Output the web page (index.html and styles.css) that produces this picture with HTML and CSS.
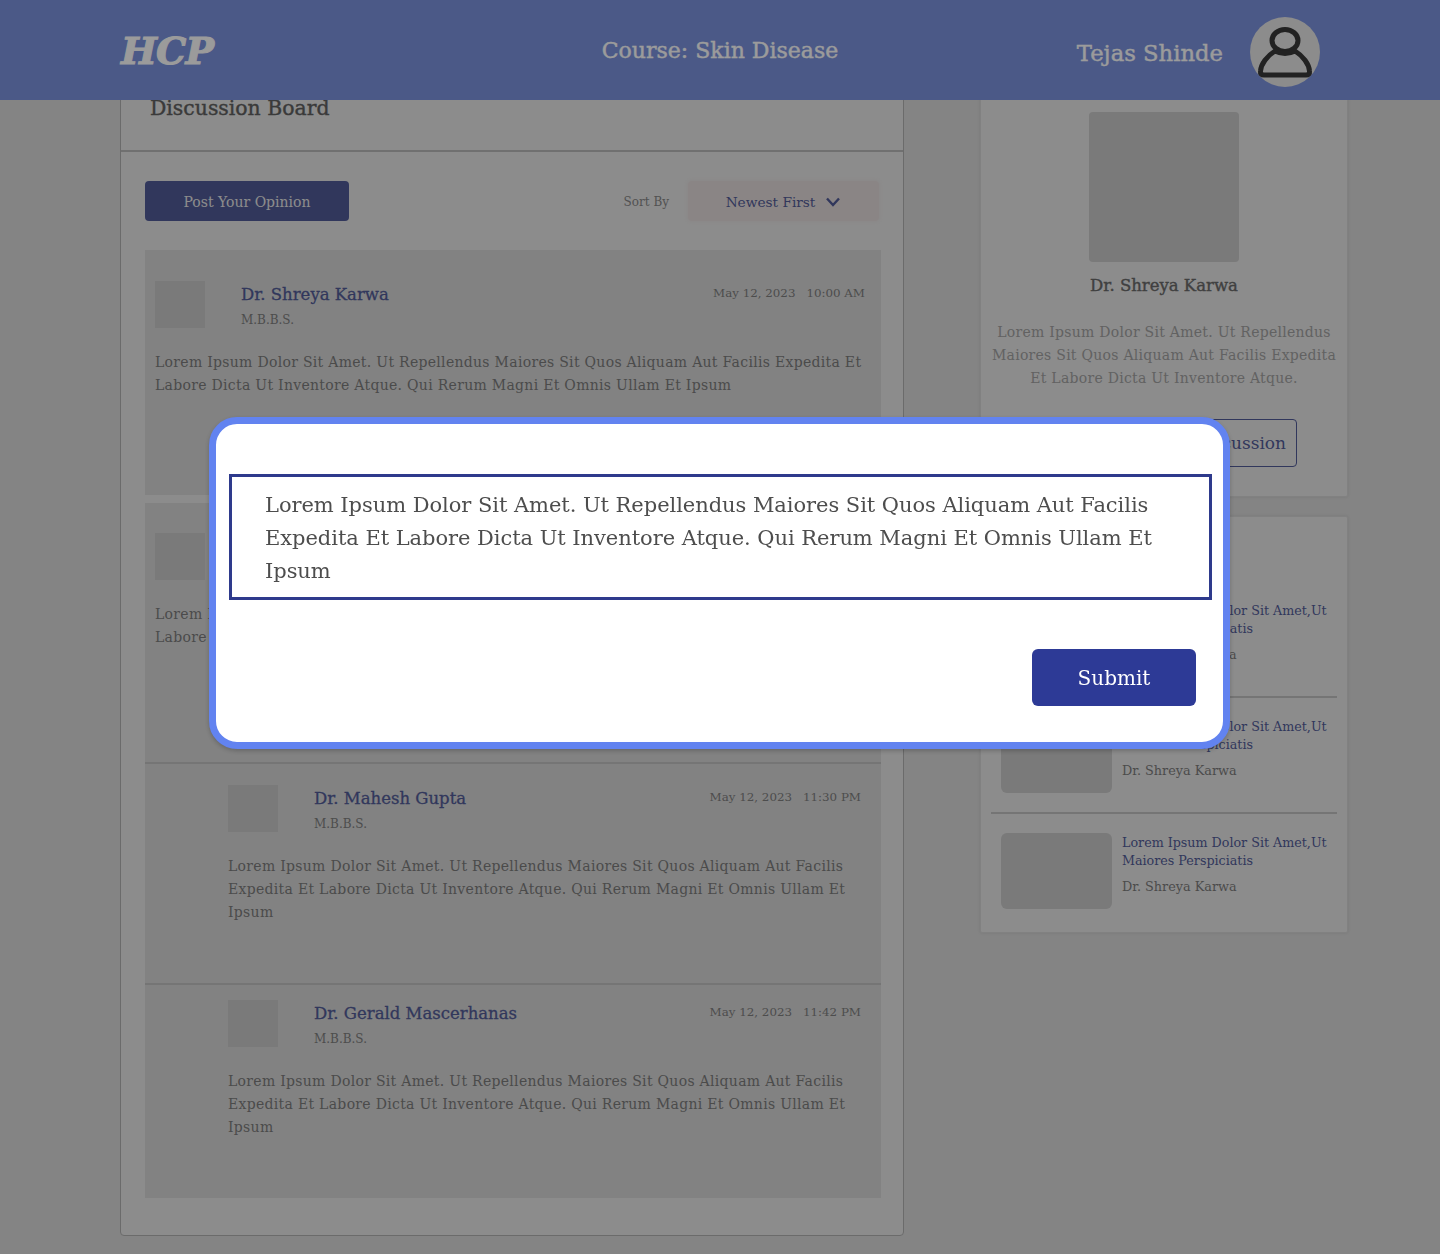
FILE: index.html
```html
<html lang="en">
<head>
    <meta charset="UTF-8">
    <meta name="viewport" content="width=device-width, initial-scale=1.0">
    <title>Discussion Board</title>
    <link rel="stylesheet" href="styles.css">
</head>
<body>
    <header class="topbar">
        <div class="logo">HCP</div>
        <div class="course">Course: Skin Disease</div>
        <div class="user">
            <span class="user_name">Tejas Shinde</span>
            <span class="user_avatar">
                <svg width="70" height="70" viewBox="0 0 70 70" fill="none" stroke="#0c0c0c" stroke-width="5">
                    <ellipse cx="35" cy="23.5" rx="13" ry="11"/>
                    <path d="M25 34 C17 39 11 47 10.5 54 Q10 58 14 58 H56 Q60 58 59.5 54 C59 47 53 39 45 34 Q35 39 25 34 Z" stroke-linejoin="round"/>
                </svg>
            </span>
        </div>
    </header>

    <main class="layout">
        <section class="board">
            <h1 class="board_title">Discussion Board</h1>
            <div class="board_body">
                <div class="board_tools">
                    <button class="post_btn">Post Your Opinion</button>
                    <div class="sort">
                        <span class="sort_label">Sort By</span>
                        <div class="sort_box">
                            Newest First
                            <svg width="16" height="10" viewBox="0 0 16 10" fill="none" stroke="#2a3680" stroke-width="2.4">
                                <path d="M2 1.5 L8 8 L14 1.5"/>
                            </svg>
                        </div>
                    </div>
                </div>

                <div class="thread">
                    <article class="post post_first">
                        <div class="post_head">
                            <div class="post_avatar"></div>
                            <div class="post_who">
                                <div class="post_name">Dr. Shreya Karwa</div>
                                <div class="post_degree">M.B.B.S.</div>
                            </div>
                            <div class="post_date"><span>May 12, 2023</span><span>10:00 AM</span></div>
                        </div>
                        <p class="post_text">Lorem Ipsum Dolor Sit Amet. Ut Repellendus Maiores Sit Quos Aliquam Aut Facilis Expedita Et Labore Dicta Ut Inventore Atque. Qui Rerum Magni Et Omnis Ullam Et Ipsum</p>
                    </article>
                </div>

                <div class="thread thread_second">
                    <article class="post post_second">
                        <div class="post_head">
                            <div class="post_avatar"></div>
                            <div class="post_who">
                                <div class="post_name">Dr. Shreya Karwa</div>
                                <div class="post_degree">M.B.B.S.</div>
                            </div>
                            <div class="post_date"><span>May 12, 2023</span><span>11:00 AM</span></div>
                        </div>
                        <p class="post_text">Lorem Ipsum Dolor Sit Amet. Ut Repellendus Maiores Sit Quos Aliquam Aut Facilis Expedita Et Labore Dicta Ut Inventore Atque. Qui Rerum Magni Et Omnis Ullam Et Ipsum</p>
                    </article>
                    <article class="post post_reply reply_one">
                        <div class="post_head">
                            <div class="post_avatar"></div>
                            <div class="post_who">
                                <div class="post_name">Dr. Mahesh Gupta</div>
                                <div class="post_degree">M.B.B.S.</div>
                            </div>
                            <div class="post_date"><span>May 12, 2023</span><span>11:30 PM</span></div>
                        </div>
                        <p class="post_text">Lorem Ipsum Dolor Sit Amet. Ut Repellendus Maiores Sit Quos Aliquam Aut Facilis Expedita Et Labore Dicta Ut Inventore Atque. Qui Rerum Magni Et Omnis Ullam Et Ipsum</p>
                    </article>
                    <article class="post post_reply reply_two">
                        <div class="post_head">
                            <div class="post_avatar"></div>
                            <div class="post_who">
                                <div class="post_name">Dr. Gerald Mascerhanas</div>
                                <div class="post_degree">M.B.B.S.</div>
                            </div>
                            <div class="post_date"><span>May 12, 2023</span><span>11:42 PM</span></div>
                        </div>
                        <p class="post_text">Lorem Ipsum Dolor Sit Amet. Ut Repellendus Maiores Sit Quos Aliquam Aut Facilis Expedita Et Labore Dicta Ut Inventore Atque. Qui Rerum Magni Et Omnis Ullam Et Ipsum</p>
                    </article>
                </div>
            </div>
        </section>

        <aside class="side">
            <section class="side_card doctor">
                <div class="doctor_photo"></div>
                <h2 class="doctor_name">Dr. Shreya Karwa</h2>
                <p class="doctor_text">Lorem Ipsum Dolor Sit Amet. Ut Repellendus Maiores Sit Quos Aliquam Aut Facilis Expedita Et Labore Dicta Ut Inventore Atque.</p>
                <button class="doctor_btn">Join Discussion</button>
            </section>
            <section class="side_card related">
                <div class="related_item">
                    <div class="related_thumb"></div>
                    <div class="related_info">
                        <div class="related_title">Lorem Ipsum Dolor Sit Amet,Ut Maiores Perspiciatis</div>
                        <div class="related_author">Dr. Shreya Karwa</div>
                    </div>
                </div>
                <div class="related_item">
                    <div class="related_thumb"></div>
                    <div class="related_info">
                        <div class="related_title">Lorem Ipsum Dolor Sit Amet,Ut Maiores Perspiciatis</div>
                        <div class="related_author">Dr. Shreya Karwa</div>
                    </div>
                </div>
                <div class="related_item">
                    <div class="related_thumb"></div>
                    <div class="related_info">
                        <div class="related_title">Lorem Ipsum Dolor Sit Amet,Ut Maiores Perspiciatis</div>
                        <div class="related_author">Dr. Shreya Karwa</div>
                    </div>
                </div>
            </section>
        </aside>
    </main>

    <div class="overlay">
        <form class="modal">
            <div class="modal_text">Lorem Ipsum Dolor Sit Amet. Ut Repellendus Maiores Sit Quos Aliquam Aut Facilis Expedita Et Labore Dicta Ut Inventore Atque. Qui Rerum Magni Et Omnis Ullam Et Ipsum</div>
            <div class="modal_actions">
                <button type="button" class="submit_btn">Submit</button>
            </div>
        </form>
    </div>
</body>
</html>
```

FILE: styles.css
```css
/* Reset some default styles */
body, h1, h2, p {
    margin: 0;
    padding: 0;
}
* {
    box-sizing: border-box;
}
body {
    font-family: "DejaVu Serif", serif;
    background-color: #d0d0d0;
    height: 1254px;
    overflow: hidden;
}
button {
    font-family: inherit;
    cursor: pointer;
}

/* Top bar */
.topbar {
    position: fixed;
    top: 0;
    left: 0;
    right: 0;
    height: 100px;
    padding: 0 120px;
    background-color: #5e7ad6;
    display: grid;
    grid-template-columns: 1fr auto 1fr;
    align-items: center;
    color: #fff;
    z-index: 2;
}
.logo {
    font-size: 38px;
    font-weight: 700;
    font-style: italic;
    letter-spacing: -0.8px;
    -webkit-text-stroke: 1px #fff;
    margin-left: 1px;
}
.course {
    font-size: 22px;
    -webkit-text-stroke: 0.4px #fff;
}
.user {
    justify-self: end;
    display: flex;
    align-items: center;
    gap: 27px;
    margin-top: 4px;
}
.user_name {
    font-size: 22.7px;
    -webkit-text-stroke: 0.4px #fff;
    margin-top: 1px;
}
.user_avatar {
    width: 70px;
    height: 70px;
    border-radius: 50%;
    background-color: #e0e0e0;
    display: block;
}

/* Page columns */
.layout {
    padding: 70px 92px 0 120px;
    display: flex;
    justify-content: space-between;
    align-items: flex-start;
}
.board {
    width: 784px;
    height: 1166px;
    background-color: #e0e0e0;
    border: 1px solid #9e9e9e;
    border-radius: 4px;
}
.board_title {
    height: 81px;
    padding: 25px 29px 0;
    font-size: 20.4px;
    font-weight: 400;
    -webkit-text-stroke: 0.4px #3c3c3c;
    color: #3c3c3c;
    border-bottom: 2px solid #a8a8a8;
}
.board_body {
    padding: 29px 22px 0 24px;
}
.board_tools {
    display: flex;
    justify-content: space-between;
    align-items: center;
    height: 40px;
}
.post_btn {
    width: 204px;
    height: 40px;
    padding-top: 2px;
    border: none;
    border-radius: 4px;
    background-color: #2a3680;
    color: #e0e0e0;
    font-size: 14px;
}
.sort {
    display: flex;
    align-items: center;
    gap: 19px;
    margin-right: 2px;
}
.sort_label {
    font-size: 12px;
    color: #6c6c6c;
    padding-top: 1px;
}
.sort_box {
    width: 191px;
    height: 40px;
    padding-top: 1px;
    border-radius: 4px;
    background-color: #dcd2d2;
    box-shadow: 0 0 4px #dcd2d2;
    color: #2a3680;
    font-size: 13.7px;
    display: flex;
    align-items: center;
    justify-content: center;
    gap: 10px;
}

/* Discussion threads */
.thread {
    margin-top: 29px;
    background-color: #cccccc;
}
.thread_second {
    margin-top: 8px;
}
.post {
    padding: 31px 16px 0 10px;
}
.post_first {
    height: 245px;
}
.post_second {
    height: 261px;
    padding-top: 30px;
    border-bottom: 2px solid #b2b2b2;
}
.post_reply {
    padding-left: 83px;
    padding-right: 20px;
}
.reply_one {
    height: 221px;
    padding-top: 21px;
    border-bottom: 2px solid #b2b2b2;
}
.reply_two {
    height: 213px;
    padding-top: 15px;
}
.post_head {
    display: flex;
    align-items: flex-start;
}
.post_avatar {
    width: 50px;
    height: 47px;
    background-color: #bcbcbc;
    flex-shrink: 0;
}
.post_who {
    margin-left: 36px;
    margin-top: 2px;
    flex-grow: 1;
}
.post_name {
    font-size: 16.5px;
    -webkit-text-stroke: 0.3px #2a3680;
    color: #2a3680;
    line-height: 24px;
}
.post_degree {
    font-size: 12px;
    color: #626262;
    line-height: 18px;
    margin-top: 4px;
}
.post_date {
    font-size: 11.85px;
    color: #626262;
    display: flex;
    gap: 11px;
    line-height: 24px;
}
.post_text {
    margin-top: 22px;
    font-size: 14px;
    letter-spacing: 0.3px;
    line-height: 23px;
    color: #5e5e5e;
}

/* Right column */
.side {
    width: 368px;
    display: flex;
    flex-direction: column;
    gap: 19px;
}
.side_card {
    background-color: #e0e0e0;
    border: 1px solid #cacaca;
    border-radius: 2px;
    box-shadow: 0 0 3px rgba(0, 0, 0, 0.12);
}
.doctor {
    height: 427px;
    padding: 41px 8px 0;
    display: flex;
    flex-direction: column;
    align-items: center;
}
.doctor_photo {
    width: 150px;
    height: 150px;
    border-radius: 4px;
    background-color: #bcbcbc;
}
.doctor_name {
    margin-top: 11px;
    font-size: 16.5px;
    font-weight: 400;
    -webkit-text-stroke: 0.4px #484848;
    line-height: 26px;
    color: #484848;
}
.doctor_text {
    margin-top: 22px;
    font-size: 14px;
    letter-spacing: 0.27px;
    line-height: 23px;
    text-align: center;
    color: #8c8c8c;
}
.doctor_btn {
    margin-top: 29px;
    width: 266px;
    height: 48px;
    padding-right: 10px;
    text-align: right;
    background: none;
    border: 1px solid #2a3680;
    border-radius: 4px;
    color: #2a3680;
    font-size: 17px;
}
.related {
    height: 417px;
    padding: 65px 10px 0;
}
.related_item {
    display: flex;
    gap: 10px;
    padding: 19px 4px 19px 10px;
    height: 116px;
    border-bottom: 2px solid #b2b2b2;
}
.related_item:last-child {
    border-bottom: none;
}
.related_info {
    padding-top: 1px;
}
.related_thumb {
    width: 111px;
    height: 76px;
    border-radius: 6px;
    background-color: #bcbcbc;
    flex-shrink: 0;
}
.related_title {
    font-size: 12.7px;
    line-height: 18px;
    color: #2a3680;
}
.related_author {
    margin-top: 8px;
    font-size: 12.8px;
    line-height: 18px;
    color: #5e5e5e;
}

/* Popup */
.overlay {
    position: fixed;
    inset: 0;
    background-color: rgba(56, 56, 56, 0.5);
    z-index: 3;
    padding-top: 417px;
    display: flex;
    justify-content: center;
    align-items: flex-start;
}
.modal {
    width: 1021px;
    height: 332px;
    margin-right: 1px;
    padding: 50px 11px 0 13px;
    background-color: #fff;
    border: 7px solid #6283f0;
    border-radius: 28px;
    box-shadow: 0 2px 4px rgba(0, 0, 0, 0.2);
}
.modal_text {
    height: 126px;
    padding: 12px 33px;
    border: 3px solid #2e3a8c;
    font-size: 21px;
    letter-spacing: -0.05px;
    line-height: 33px;
    color: #4d4d4d;
}
.modal_actions {
    display: flex;
    justify-content: flex-end;
    margin-top: 49px;
    padding-right: 16px;
}
.submit_btn {
    width: 164px;
    height: 57px;
    border: none;
    border-radius: 6px;
    background-color: #2d3a96;
    color: #fff;
    font-size: 20px;
}
```
